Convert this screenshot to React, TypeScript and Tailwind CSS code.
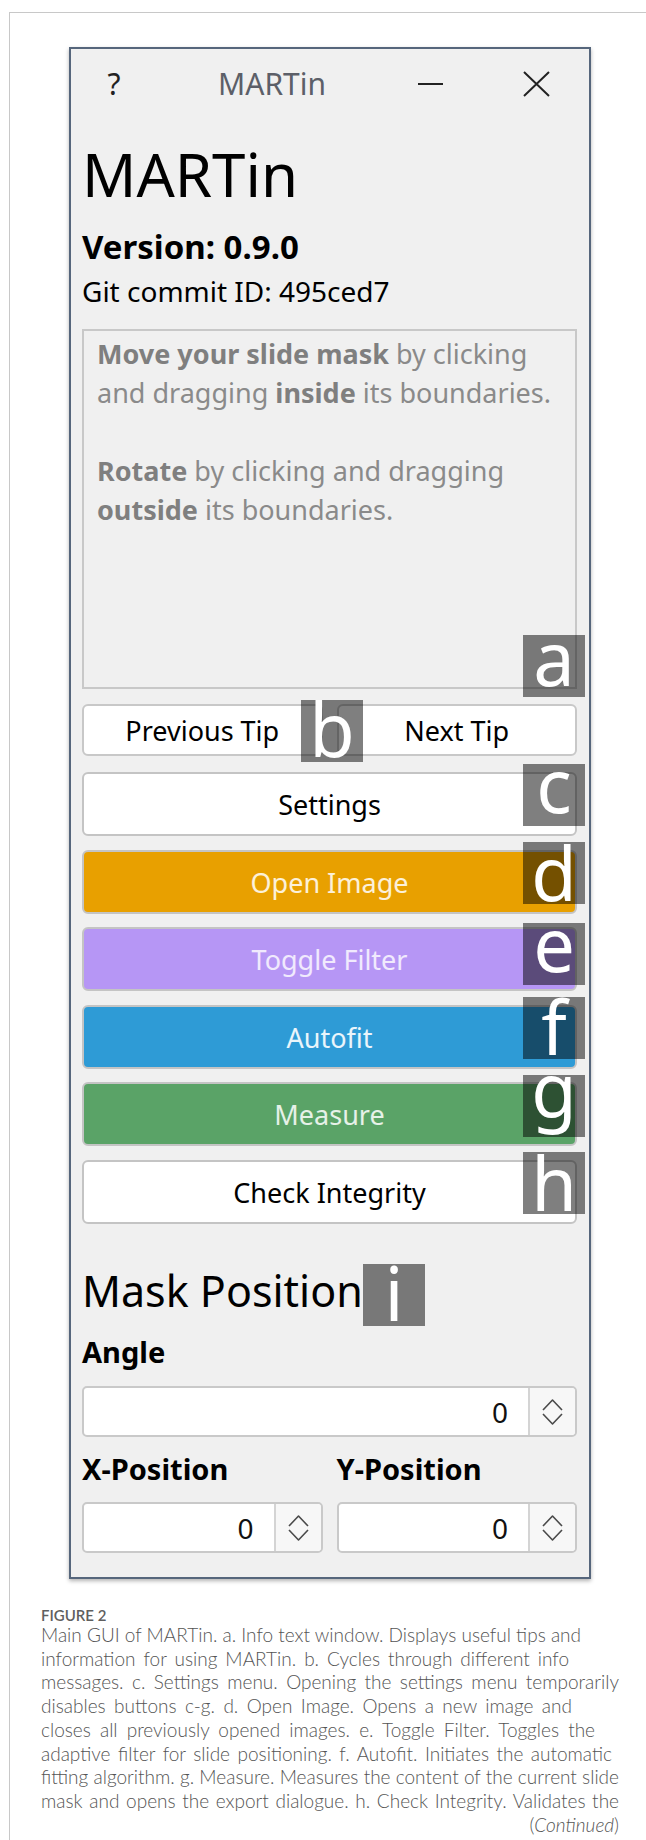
import React from 'react'

const ui = "font-['Noto_Sans','Open_Sans',sans-serif]"

type TagProps = { letter: string; box: string; glyph: string }

// dark translucent letter marker laid over a control
function Tag({ letter, box, glyph }: TagProps) {
  return (
    <span className={`pointer-events-none absolute flex h-[62px] w-[62px] justify-center bg-black/50 text-white ${box}`}>
      <span className={`relative text-[74px] font-normal leading-none ${glyph}`}>{letter}</span>
    </span>
  )
}

function Chevrons() {
  return (
    <svg width="21" height="28" viewBox="0 0 21 28" fill="none" stroke="#4a4a4a" strokeWidth="1.6" strokeLinejoin="round">
      <path d="M1 12 L10.5 2 L20 12" />
      <path d="M1 16 L10.5 26 L20 16" />
    </svg>
  )
}

function SpinBox() {
  return (
    <div className="flex h-[51px] rounded-[5px] border-2 border-[#c9c9c9] bg-white">
      <div className="flex flex-1 items-center justify-end pr-[20px] text-[28px] leading-none text-[#111]">0</div>
      <div className="flex w-[47px] items-center justify-center rounded-r-[4px] border-l-2 border-[#d4d4d4] bg-[#f7f7f7]">
        <Chevrons />
      </div>
    </div>
  )
}

const actions = [
  {
    label: 'Settings',
    tone: 'bg-white text-black',
    gap: 'mt-0',
    tag: { letter: 'c', box: 'left-[439px] top-[-10px]', glyph: 'top-[-16px]' },
  },
  {
    label: 'Open Image',
    tone: 'bg-[#e8a000] text-white/85',
    gap: 'mt-[14px]',
    tag: { letter: 'd', box: 'left-[439px] top-[-10px]', glyph: 'top-[-6px]' },
  },
  {
    label: 'Toggle Filter',
    tone: 'bg-[#b696f5] text-white/80',
    gap: 'mt-[13px]',
    tag: { letter: 'e', box: 'left-[439px] top-[-6px]', glyph: 'top-[-16px]' },
  },
  {
    label: 'Autofit',
    tone: 'bg-[#2e9bd6] text-white/90',
    gap: 'mt-[14px]',
    tag: { letter: 'f', box: 'left-[439px] top-[-10px]', glyph: 'top-[-7px]' },
  },
  {
    label: 'Measure',
    tone: 'bg-[#5aa367] text-white/85',
    gap: 'mt-[13px]',
    tag: { letter: 'g', box: 'left-[439px] top-[-9px]', glyph: 'top-[-23px]' },
  },
  {
    label: 'Check Integrity',
    tone: 'bg-white text-black',
    gap: 'mt-[14px]',
    tag: { letter: 'h', box: 'left-[439px] top-[-10px]', glyph: 'top-[-6px]' },
  },
]

function Window() {
  return (
    <div className={`ml-[59px] h-[1532px] w-[522px] border-2 border-[#56667c] bg-[#f0f0f0] shadow-[0_2px_4px_rgba(0,0,0,0.3)] ${ui}`}>
      {/* title bar */}
      <div className="flex h-[70px] items-center">
        <div className="flex w-[86px] justify-center text-[30px] leading-none text-[#222]">?</div>
        <div className="flex w-[230px] justify-center text-[30px] leading-none text-[#5c5f68]">MARTin</div>
        <div className="flex w-[86px] justify-center">
          <span className="block h-[2px] w-[25px] bg-[#222]" />
        </div>
        <div className="flex pl-[50px]">
          <svg width="27" height="26" viewBox="0 0 27 26" stroke="#222" strokeWidth="2">
            <path d="M1 1 L26 25 M26 1 L1 25" />
          </svg>
        </div>
      </div>

      <div className="pl-[11px] pr-[12px]">
        <h1 className="mt-[25px] text-[60px] leading-none text-black">MARTin</h1>
        <p className="mt-[26px] text-[33px] font-bold leading-none text-black">Version: 0.9.0</p>
        <p className="mt-[14px] text-[28px] leading-none text-black">Git commit ID: 495ced7</p>

        {/* tip panel */}
        <div className="relative mt-[24px] h-[360px] border-2 border-[#c8c8c8] pl-[13px] pt-[3px] text-[27px] leading-[39px] text-[#8a8a8a]">
          <p className="whitespace-nowrap">
            <b className="font-bold text-[#7f7f7f]">Move your slide mask</b> by clicking
            <br />
            and dragging <b className="font-bold text-[#7f7f7f]">inside</b> its boundaries.
          </p>
          <p className="mt-[39px] whitespace-nowrap">
            <b className="font-bold text-[#7f7f7f]">Rotate</b> by clicking and dragging
            <br />
            <b className="font-bold text-[#7f7f7f]">outside</b> its boundaries.
          </p>
          <Tag letter="a" box="left-[439px] top-[304px]" glyph="top-[-14px]" />
        </div>

        {/* tip navigation */}
        <div className="relative mt-[15px] grid h-[52px] grid-cols-2 gap-[14px]">
          <button className="flex items-center justify-center rounded-[6px] border-2 border-[#c8c8c8] bg-white text-[27px] leading-none text-black">
            Previous Tip
          </button>
          <button className="flex items-center justify-center rounded-[6px] border-2 border-[#c8c8c8] bg-white text-[27px] leading-none text-black">
            Next Tip
          </button>
          <Tag letter="b" box="left-[219px] top-[-4px]" glyph="top-[-8px]" />
        </div>

        <div className="mt-[16px] flex flex-col">
          {actions.map((a) => (
            <button
              key={a.label}
              className={`relative flex h-[64px] items-center justify-center rounded-[6px] border-2 border-[#c4c4c4] text-[27px] leading-none ${a.tone} ${a.gap}`}
            >
              {a.label}
              <Tag {...a.tag} />
            </button>
          ))}
        </div>

        {/* mask position */}
        <div className="relative mt-[45px]">
          <h2 className="text-[43px] leading-none text-black">Mask Position</h2>
          <Tag letter="i" box="left-[281px] top-[-5px]" glyph="top-[-8px]" />
        </div>
        <p className="mt-[25px] text-[29px] font-bold leading-none text-black">Angle</p>
        <div className="mt-[20px]">
          <SpinBox />
        </div>
        <div className="mt-[17px] grid grid-cols-2 gap-x-[14px]">
          <p className="text-[29px] font-bold leading-none text-black">X-Position</p>
          <p className="text-[29px] font-bold leading-none text-black">Y-Position</p>
          <div className="mt-[19px]">
            <SpinBox />
          </div>
          <div className="mt-[19px]">
            <SpinBox />
          </div>
        </div>
      </div>
    </div>
  )
}

// caption lines, each set to the measure it fills in print
const caption = [
  { text: 'Main GUI of MARTin. a. Info text window. Displays useful tips and', w: 'w-[536px]' },
  { text: 'information for using MARTin. b. Cycles through different info', w: 'w-[528px]' },
  { text: 'messages. c. Settings menu. Opening the settings menu temporarily', w: 'w-[578px]' },
  { text: 'disables buttons c-g. d. Open Image. Opens a new image and', w: 'w-[531px]' },
  { text: 'closes all previously opened images. e. Toggle Filter. Toggles the', w: 'w-[554px]' },
  { text: 'adaptive filter for slide positioning. f. Autofit. Initiates the automatic', w: 'w-[571px]' },
  { text: 'fitting algorithm. g. Measure. Measures the content of the current slide', w: 'w-[578px]' },
  { text: 'mask and opens the export dialogue. h. Check Integrity. Validates the', w: 'w-[578px]' },
]

function Caption() {
  return (
    <div className="ml-[31px] mt-[29px] w-[578px] font-['Lato','Noto_Sans',sans-serif]">
      <p className="text-[15px] font-semibold leading-none text-[#5f5f5f]">FIGURE 2</p>
      <div className="text-[19px] font-light leading-[23.7px] text-[#555]">
        {caption.map((line) => (
          <div key={line.text} className={`whitespace-nowrap text-justify [text-align-last:justify] ${line.w}`}>
            {line.text}
          </div>
        ))}
        <div className="text-right">
          (<i>Continued</i>)
        </div>
      </div>
    </div>
  )
}

export default function App() {
  return (
    <div className="h-[1840px] w-[646px] overflow-hidden bg-white pl-[9px] pt-[12px]">
      <div className="h-full border-l border-t border-[#c8c8c8] pt-[34px]">
        <Window />
        <Caption />
      </div>
    </div>
  )
}
